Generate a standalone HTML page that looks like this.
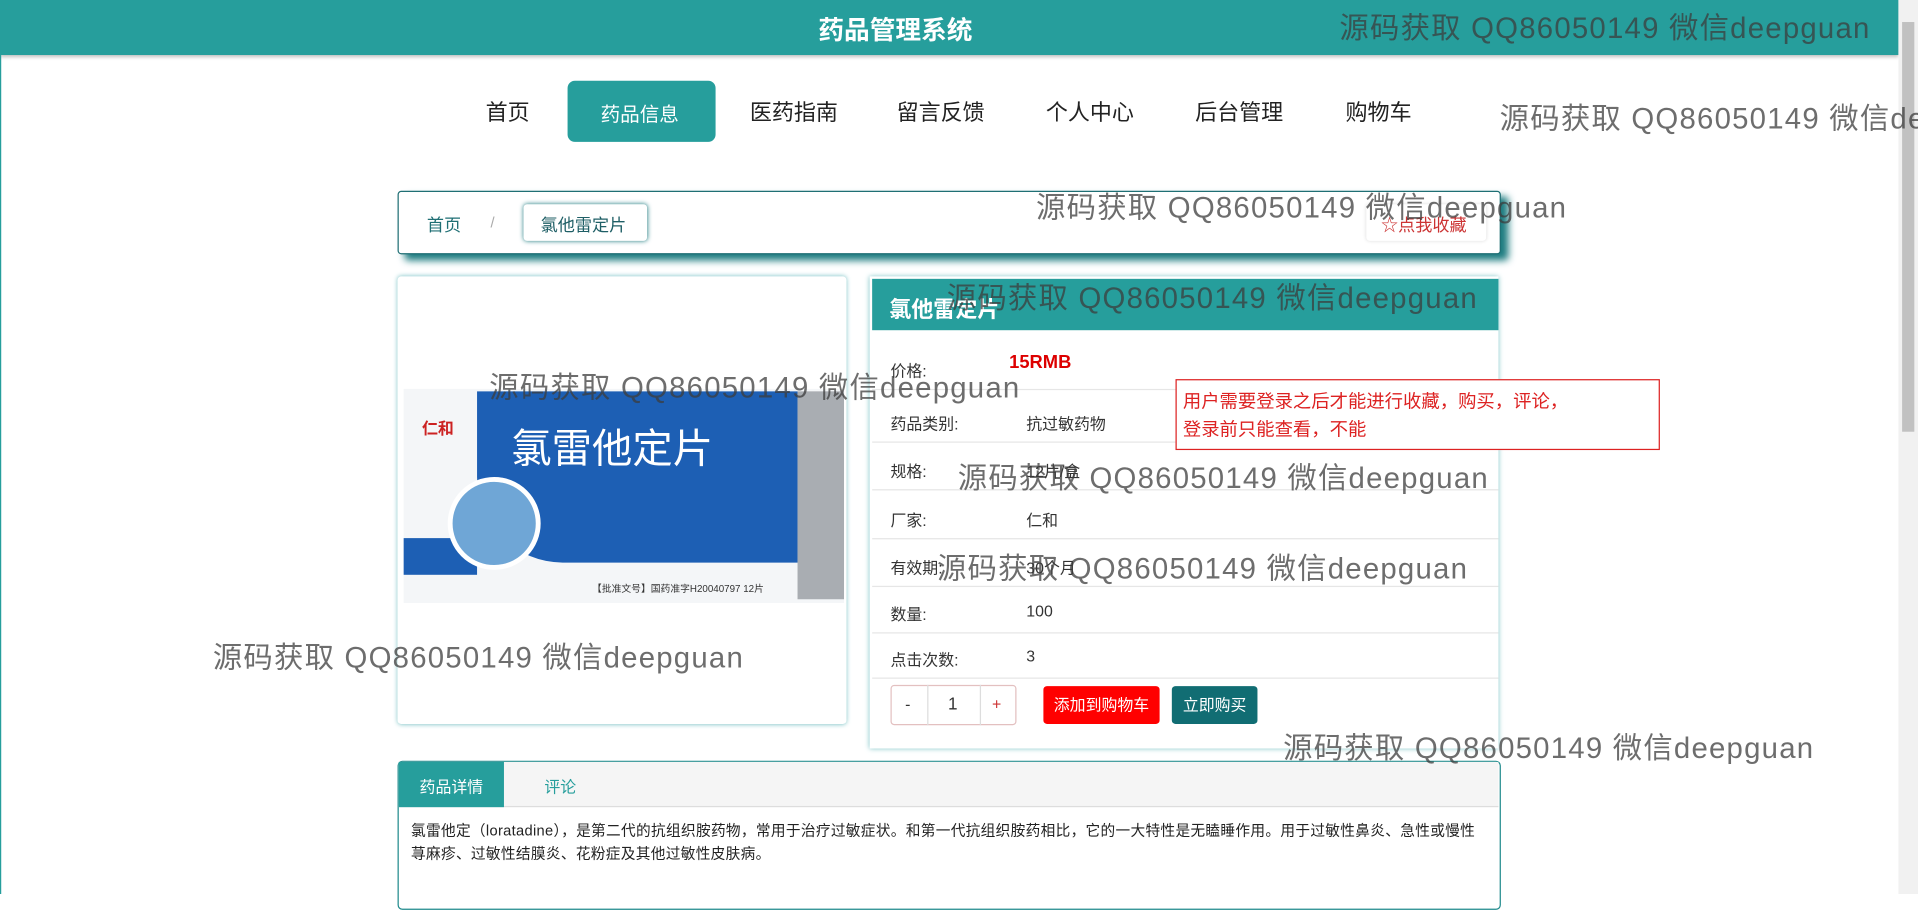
<!DOCTYPE html>
<html><head><meta charset="utf-8"><style>
html,body{margin:0;padding:0;width:1918px;height:894px;overflow:hidden;background:#fff}
#w{position:absolute;left:0;top:0;width:1568px;height:731px;transform:scale(1.22321,1.22298);transform-origin:0 0;font-family:"Liberation Sans","Noto Sans CJK SC",sans-serif;color:#333}
.a{position:absolute}
.wm{position:absolute;font-size:24px;letter-spacing:1px;color:rgba(60,60,60,.75);white-space:nowrap}
.nav{font-size:18px;color:#222;top:78px}
.row{position:absolute;left:713px;width:512px;height:38px;border-bottom:1px solid #e6e6e6;font-size:13px;color:#333}
.row span{position:absolute;top:13px}
</style></head><body><div id="w">
<div class="a" style="left:0;top:0;width:1552px;height:45px;background:#269e9c;box-shadow:0 2px 3px rgba(0,0,0,.25)"></div>
<div class="a" style="left:669px;top:9px;font-size:21px;color:#fff;font-weight:bold">药品管理系统</div>
<div class="a" style="left:1552px;top:0;width:16px;height:731px;background:#f1f1f1"></div>
<div class="a" style="left:1555px;top:18px;width:10px;height:335px;background:#c1c1c1"></div>
<div class="a" style="left:0;top:45px;width:1px;height:686px;background:#269e9c"></div>
<div class="a nav" style="left:397px">首页</div>
<div class="a" style="left:464px;top:66px;width:121px;height:50px;background:#269e9c;border-radius:6px"></div>
<div class="a nav" style="left:491px;top:80px;color:#fff;font-size:16px">药品信息</div>
<div class="a nav" style="left:613px">医药指南</div>
<div class="a nav" style="left:733px">留言反馈</div>
<div class="a nav" style="left:855px">个人中心</div>
<div class="a nav" style="left:977px">后台管理</div>
<div class="a nav" style="left:1100px">购物车</div>
<div class="a" style="left:325px;top:156px;width:900px;height:50px;border:1px solid #1f6f74;border-radius:3px;background:#fff;box-shadow:6px 5px 6px #1d7c80"></div>
<div class="a" style="left:349px;top:174px;font-size:14px;color:#1f6f74">首页</div>
<div class="a" style="left:401px;top:175px;font-size:12px;color:#aaa">/</div>
<div class="a" style="left:428px;top:167px;width:101px;height:30px;border-radius:3px;box-shadow:0 0 4px #1f7c80;background:#fff"></div>
<div class="a" style="left:442px;top:174px;font-size:14px;color:#1f5f66">氯他雷定片</div>
<div class="a" style="left:1117px;top:167px;width:98px;height:30px;border-radius:3px;box-shadow:0 0 3px #ddd;background:#fff"></div>
<div class="a" style="left:1129px;top:174px;font-size:14px;color:#c33">☆点我收藏</div>
<div class="a" style="left:325px;top:226px;width:367px;height:366px;background:#fff;border-radius:3px;box-shadow:0 0 4px #7cc3c6"></div>
<div class="a" style="left:330px;top:318px;width:360px;height:175px;background:#f4f6f8"></div>
<div class="a" style="left:390px;top:320px;width:262px;height:140px;background:#1d5fb4;border-bottom-left-radius:70px"></div>
<div class="a" style="left:652px;top:320px;width:38px;height:170px;background:#a9adb2"></div>
<div class="a" style="left:330px;top:440px;width:60px;height:30px;background:#1d5fb4"></div>
<div class="a" style="left:366px;top:390px;width:68px;height:68px;border-radius:50%;background:#6fa6d6;border:4px solid #fff"></div>
<div class="a" style="left:418px;top:340px;font-size:33px;color:#fff">氯雷他定片</div>
<div class="a" style="left:345px;top:340px;font-size:13px;color:#c22;font-weight:bold">仁和</div>
<div class="a" style="left:484px;top:476px;font-size:8px;color:#333">【批准文号】国药准字H20040797 12片</div>
<div class="a" style="left:711px;top:226px;width:514px;height:386px;background:#fff;box-shadow:0 0 4px #7cc3c6"></div>
<div class="a" style="left:713px;top:228px;width:512px;height:42px;background:#269e9c"></div>
<div class="a" style="left:727px;top:239px;font-size:18px;color:#fff;font-weight:bold">氯他雷定片</div>
<div class="row" style="top:280px"><span style="left:15px">价格:</span><span style="left:112px;top:8px;color:#d00;font-weight:bold;font-size:15px">15RMB</span></div>
<div class="row" style="top:323px"><span style="left:15px">药品类别:</span><span style="left:126px">抗过敏药物</span></div>
<div class="row" style="top:362px"><span style="left:15px">规格:</span><span style="left:126px">12片/盒</span></div>
<div class="row" style="top:402px"><span style="left:15px">厂家:</span><span style="left:126px">仁和</span></div>
<div class="row" style="top:441px"><span style="left:15px">有效期:</span><span style="left:126px">30个月</span></div>
<div class="row" style="top:479px"><span style="left:15px">数量:</span><span style="left:126px">100</span></div>
<div class="row" style="top:516px"><span style="left:15px">点击次数:</span><span style="left:126px">3</span></div>
<div class="a" style="left:728px;top:560px;width:101px;height:31px;border:1px solid #e3c0c0;border-radius:3px"></div>
<div class="a" style="left:758px;top:560px;width:42px;height:33px;border-left:1px solid #ddd;border-right:1px solid #ddd"></div>
<div class="a" style="left:740px;top:568px;font-size:13px">-</div>
<div class="a" style="left:775px;top:567px;font-size:14px">1</div>
<div class="a" style="left:811px;top:568px;font-size:13px;color:#c33">+</div>
<div class="a" style="left:853px;top:561px;width:95px;height:31px;background:#f00;border-radius:3px;color:#fff;font-size:13px;line-height:31px;text-align:center">添加到购物车</div>
<div class="a" style="left:958px;top:561px;width:70px;height:31px;background:#116d73;border-radius:3px;color:#fff;font-size:13px;line-height:31px;text-align:center">立即购买</div>
<div class="a" style="left:961px;top:310px;width:394px;height:56px;border:1px solid #d22;background:#fff"></div>
<div class="a" style="left:967px;top:317px;font-size:15px;color:#d22;line-height:23px">用户需要登录之后才能进行收藏，购买，评论，<br>登录前只能查看，不能</div>
<div class="a" style="left:325px;top:622px;width:900px;height:120px;border:1px solid #1f8a8c;border-radius:4px;background:#fff"></div>
<div class="a" style="left:326px;top:623px;width:899px;height:36px;background:#f5f5f5;border-bottom:1px solid #ddd"></div>
<div class="a" style="left:326px;top:623px;width:86px;height:37px;background:#269e9c"></div>
<div class="a" style="left:343px;top:633px;font-size:13px;color:#fff">药品详情</div>
<div class="a" style="left:445px;top:633px;font-size:13px;color:#269e9c">评论</div>
<div class="a" style="left:336px;top:670px;width:882px;font-size:12px;letter-spacing:0.25px;line-height:19px;color:#222">氯雷他定（loratadine），是第二代的抗组织胺药物，常用于治疗过敏症状。和第一代抗组织胺药相比，它的一大特性是无瞌睡作用。用于过敏性鼻炎、急性或慢性荨麻疹、过敏性结膜炎、花粉症及其他过敏性皮肤病。</div>
<div class="wm" style="left:1095px;top:3px">源码获取 QQ86050149 微信deepguan</div>
<div class="wm" style="left:1226px;top:77px">源码获取 QQ86050149 微信deepguan</div>
<div class="wm" style="left:847px;top:150px">源码获取 QQ86050149 微信deepguan</div>
<div class="wm" style="left:774px;top:224px">源码获取 QQ86050149 微信deepguan</div>
<div class="wm" style="left:400px;top:297px">源码获取 QQ86050149 微信deepguan</div>
<div class="wm" style="left:783px;top:371px">源码获取 QQ86050149 微信deepguan</div>
<div class="wm" style="left:766px;top:445px">源码获取 QQ86050149 微信deepguan</div>
<div class="wm" style="left:174px;top:518px">源码获取 QQ86050149 微信deepguan</div>
<div class="wm" style="left:1049px;top:592px">源码获取 QQ86050149 微信deepguan</div>
</div></body></html>
